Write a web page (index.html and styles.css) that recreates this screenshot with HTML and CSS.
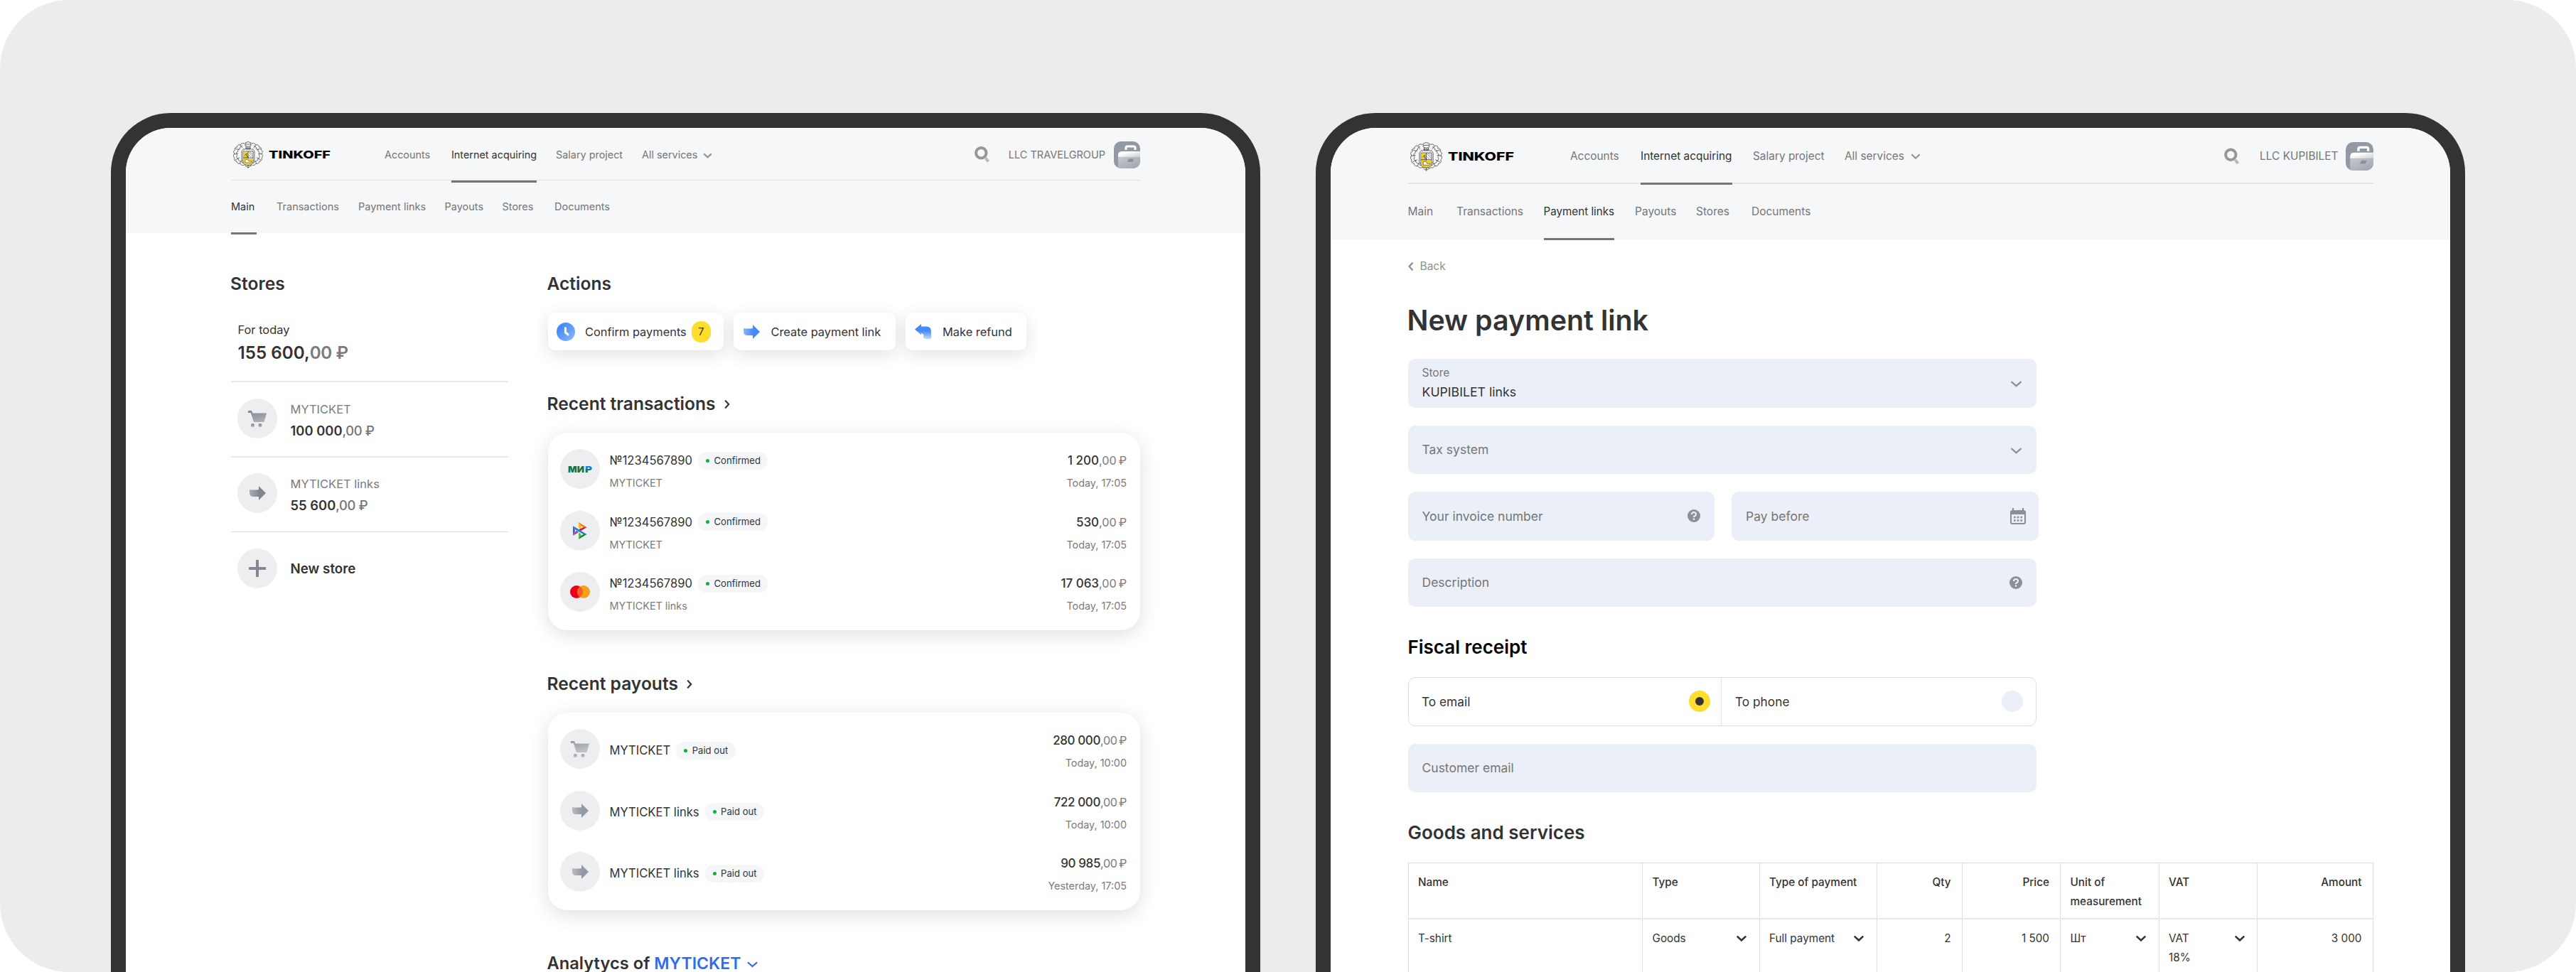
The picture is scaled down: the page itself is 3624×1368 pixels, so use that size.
FILE: index.html
```html
<!DOCTYPE html>
<html lang="en">
<head>
<meta charset="utf-8">
<title>Tinkoff Business</title>
<link rel="stylesheet" href="styles.css">
</head>
<body>
<svg class="sprite" width="0" height="0" aria-hidden="true">
  <defs>
    <linearGradient id="g-blue" x1="0" y1="0" x2="1" y2="0"><stop offset="0" stop-color="#8DB7FB"/><stop offset=".6" stop-color="#428BF9"/></linearGradient>
    <linearGradient id="g-blue-down" x1="0" y1="0" x2="0" y2="1"><stop offset=".45" stop-color="#428BF9"/><stop offset="1" stop-color="#C4DAFD"/></linearGradient>
    <linearGradient id="g-clock" x1="0" y1="0" x2="1" y2="1"><stop offset=".2" stop-color="#428BF9"/><stop offset="1" stop-color="#8DB7FB"/></linearGradient>
    <linearGradient id="g-gray" x1="0" y1="0" x2="1" y2="0"><stop offset="0" stop-color="#A9AFB6"/><stop offset=".6" stop-color="#7D858F"/></linearGradient>
    <linearGradient id="g-gray-light" x1="0" y1="0" x2="1" y2="0"><stop offset="0" stop-color="#B7BBC2"/><stop offset=".6" stop-color="#9299A4"/></linearGradient>
    <linearGradient id="g-cart" x1="0" y1="0" x2=".3" y2="1"><stop offset="0" stop-color="#7D858F"/><stop offset="1" stop-color="#A9AFB6"/></linearGradient>
    <linearGradient id="g-cart-light" x1="0" y1="0" x2=".3" y2="1"><stop offset="0" stop-color="#9299A4"/><stop offset="1" stop-color="#BFC3C9"/></linearGradient>
    <linearGradient id="g-lid" x1="0" y1="0" x2="1" y2="1"><stop offset=".3" stop-color="#fff"/><stop offset="1" stop-color="#C9CCD1"/></linearGradient>
    <linearGradient id="g-case" x1="0" y1="0" x2="1" y2="1"><stop offset="0" stop-color="#C6C9CE"/><stop offset="1" stop-color="#9DA3AC"/></linearGradient>
    <linearGradient id="g-mir" x1="0" y1="0" x2="0" y2="1"><stop offset=".5" stop-color="#1A7FE8"/><stop offset=".52" stop-color="#0F754E"/></linearGradient>
  </defs>
  <symbol id="emblem" viewBox="0 0 42 38">
    <g fill="none" stroke="#4a4a4a" stroke-width=".8" stroke-linejoin="round">
      <path d="M16 3C13 2 11 3 10 5 7 4 5 6 6 8 3 8 1 10 3 12 0 13 0 16 2 17 0 19 0 22 2 23 1 25 2 28 5 28 5 31 8 32 10 31 11 34 14 34 16 33M26 3C29 2 31 3 32 5 35 4 37 6 36 8 39 8 41 10 39 12 42 13 42 16 40 17 42 19 42 22 40 23 41 25 40 28 37 28 37 31 34 32 32 31 31 34 28 34 26 33" />
      <path d="M13 6C10 7 9 9 10 10 7 10 6 13 7 14 4 15 4 18 6 19 4 21 5 24 7 24 7 27 9 28 11 28 12 30 14 31 15 30M29 6C32 7 33 9 32 10 35 10 36 13 35 14 38 15 38 18 36 19 38 21 37 24 35 24 35 27 33 28 31 28 30 30 28 31 27 30"/>
      <path d="M10 5l3 4M3 10l6 2M1 18l6-1M3 26l6-3M9 31l3-4M32 5l-3 4M39 10l-6 2M41 18l-6-1M39 26l-6-3M33 31l-3-4M15 10l-3 4v12l3 4M27 10l3 4v12l-3 4"/>
      <path d="M17 2q4-3 8 0v4q-4 3-8 0zM17 4h8M18 7v4h6V7M19 8v3M21 8v3M23 8v3M15 12l3-2h6l3 2"/>
      <path d="M16 33q2-1 5 1 3-2 5 1M17 34q4 5 8 0M21 34v4"/>
    </g>
    <path d="M14 14h14v15q0 4-7 4.500Q14 33 14 29z" fill="#fff" stroke="#3a3a3a" stroke-width=".8"/>
    <path d="M14.500 14.500H21v9.500h6.500v5q0 3.500-6.500 4-6.500-.5-6.500-4z" fill="#F2D02A"/>
    <path d="M21 14v10M14 23h14M16 20l3-3v4l3 1" fill="none" stroke="#3a3a3a" stroke-width=".8"/>
    <path d="M17 30v-4l3-1 2 3h4v2z" fill="#fff" stroke="#3a3a3a" stroke-width=".6"/>
    <path d="M22 15l5 6M22 19l3 3M24 15l3 3" fill="none" stroke="#777" stroke-width=".8"/>
  </symbol>
  <symbol id="search" viewBox="0 0 22 23">
    <path d="M15.500 16.500l4 5" stroke="#B9BABC" stroke-width="4.200"/>
    <circle cx="9.300" cy="9.300" r="7.200" fill="none" stroke="#969798" stroke-width="4"/>
  </symbol>
  <symbol id="avatar" viewBox="0 0 37 38">
    <clipPath id="avatar-clip"><rect width="37" height="38" rx="10"/></clipPath>
    <g clip-path="url(#avatar-clip)">
      <rect width="37" height="38" fill="#9299A4"/>
      <path d="M17 12V9q0-2 2-2h9q2 0 2 2v3" fill="none" stroke="#fff" stroke-width="3.200"/>
      <path d="M6 22v-3q0-5 6-5h25v8z" fill="url(#g-lid)"/>
      <path d="M6 22h31v16H6z" fill="url(#g-case)"/>
      <path d="M21 24.500h7l-1.500 4.500h-7.500z" fill="#89909B"/>
    </g>
  </symbol>
  <symbol id="chev-down" viewBox="0 0 16 9"><path d="M1 1.200l7 6 7-6" fill="none" stroke="currentColor" stroke-width="2.200"/></symbol>
  <symbol id="chev-down-bold" viewBox="0 0 12 8"><path d="M1 1.300l5 4.700 5-4.700" fill="none" stroke="currentColor" stroke-width="2.100"/></symbol>
  <symbol id="chev-right" viewBox="0 0 8 12"><path d="M1.200 .6l5 5.400-5 5.400" fill="none" stroke="currentColor" stroke-width="2.200"/></symbol>
  <symbol id="chev-left" viewBox="0 0 8 12"><path d="M6.500 .6l-5 5.400 5 5.400" fill="none" stroke="currentColor" stroke-width="2.300"/></symbol>
  <symbol id="arrow" viewBox="0 0 23 20"><path d="M0 5q6 1 13 0V0l10 10-10 10v-5H5q-5 0-5-6z"/></symbol>
  <symbol id="cart" viewBox="0 0 26 23"><path d="M0 0h5l1.500 3.500H26L22.500 16H8L3.800 3H0z"/><circle cx="6.500" cy="20.500" r="2.500"/><circle cx="17" cy="20.500" r="2.500"/></symbol>
  <symbol id="help" viewBox="0 0 18 18"><circle cx="9" cy="9" r="9" fill="#8C8F93"/><path d="M6 7q0-3 3-3t3 2.700Q12 8.500 9 10v1" fill="none" stroke="#EBEFF7" stroke-width="2.100"/><circle cx="9" cy="13.600" r="1.300" fill="#EBEFF7"/></symbol>
  <symbol id="calendar" viewBox="0 0 22 23">
    <path d="M4 0v4M18 0v4" stroke="#8C8F93" stroke-width="2.200"/>
    <rect x="1" y="4" width="20" height="18" rx="2" fill="none" stroke="#8C8F93" stroke-width="2"/>
    <path d="M1 4h20v5H1z" fill="#8C8F93"/>
    <path d="M5 13h12M5 17.500h12" stroke="#8C8F93" stroke-width="2.600" stroke-dasharray="2.600 2.100"/>
  </symbol>
</svg>

<div class="stage">
  <!-- Dashboard -->
  <section class="tablet tablet-left">
    <header class="header">
      <div class="topbar">
        <div class="logo"><svg class="emblem"><use href="#emblem"/></svg><svg class="wordmark" viewBox="0 0 90 12"><text x="0" y="11.300" textLength="89" lengthAdjust="spacingAndGlyphs" class="wordmark-text">TINKOFF</text></svg></div>
        <nav class="nav">
          <a>Accounts</a><a class="active">Internet acquiring</a><a>Salary project</a><a class="raised">All services<svg class="nav-chev"><use href="#chev-down-bold"/></svg></a>
        </nav>
        <div class="account"><svg class="search"><use href="#search"/></svg><span>LLC TRAVELGROUP</span><svg class="avatar"><use href="#avatar"/></svg></div>
      </div>
      <nav class="subnav"><a class="active">Main</a><a>Transactions</a><a>Payment links</a><a>Payouts</a><a>Stores</a><a>Documents</a></nav>
    </header>
    <main class="dashboard">
      <aside class="stores">
        <h2>Stores</h2>
        <div class="total">
          <div class="total-label">For today</div>
          <div class="total-sum">155 600,<span>00 ₽</span></div>
        </div>
        <div class="store">
          <span class="disc"><svg class="i-cart" fill="url(#g-cart)"><use href="#cart"/></svg></span>
          <div><div class="store-name">MYTICKET</div><div class="store-sum">100 000<span>,00 ₽</span></div></div>
        </div>
        <div class="store second">
          <span class="disc"><svg class="i-arrow" fill="url(#g-gray)"><use href="#arrow"/></svg></span>
          <div><div class="store-name">MYTICKET links</div><div class="store-sum">55 600<span>,00 ₽</span></div></div>
        </div>
        <div class="store last">
          <span class="disc"><svg width="24" height="24" viewBox="0 0 24 24"><path d="M12 0v24M0 12h24" stroke="#7F8893" stroke-width="4"/></svg></span>
          <div class="new-store">New store</div>
        </div>
      </aside>
      <div class="feed">
        <h2>Actions</h2>
        <div class="actions">
          <div class="action a1"><span class="ico"><svg width="26" height="26" viewBox="0 0 26 26"><circle cx="13" cy="13" r="13" fill="url(#g-clock)"/><path d="M12.500 6.500v7.500l4.500 3.500" fill="none" stroke="#fff" stroke-width="3"/></svg></span>Confirm payments<span class="count">7</span></div>
          <div class="action a2"><span class="ico"><svg class="i-arrow" fill="url(#g-blue)"><use href="#arrow"/></svg></span>Create payment link</div>
          <div class="action a3"><span class="ico"><svg width="23" height="21" viewBox="0 0 23 21"><path d="M0 7.500L9 0v3.500h7q7 0 7 7V21h-5q-5 0-6-2 2-5-3-6v2.500z" fill="url(#g-blue-down)"/></svg></span>Make refund</div>
        </div>
        <h2 class="next">Recent transactions<svg class="h-chev"><use href="#chev-right"/></svg></h2>
        <div class="card">
          <div class="row">
            <span class="disc"><svg width="34" height="12" viewBox="0 0 34 12"><text x="0" y="10.500" textLength="23" lengthAdjust="spacingAndGlyphs" class="mir" fill="#0F754E">МИ</text><text x="24" y="10.500" textLength="10" lengthAdjust="spacingAndGlyphs" class="mir" fill="url(#g-mir)">Р</text></svg></span>
            <div class="what"><div class="line">№1234567890<span class="badge">Confirmed</span></div><div class="sub">MYTICKET</div></div>
            <div class="sum"><div class="line">1 200<span>,00&#8201;₽</span></div><div class="sub">Today, 17:05</div></div>
          </div>
          <div class="row">
            <span class="disc"><svg width="20" height="24" viewBox="0 0 20 24"><path d="M0 5v14l2.800-5V10z" fill="#5B57A2"/><path d="M0 19l8-5-2.500-2.500L2.800 14z" fill="#90529A"/><path d="M8 0v7.500l3 2V5z" fill="#FAB718"/><path d="M8 0l11.500 7-4.500 0L11 5z" fill="#EE7E17"/><path d="M19.500 7L11 12.200 8 10.200 15 7z" fill="#E5113C"/><path d="M8 24v-9.500l3 1.800V19z" fill="#5FB346"/><path d="M8 24l11.500-7h-4.500L11 19z" fill="#118842"/><path d="M0 5l19.500 12h-4.700L2.800 10z" fill="#1E87CB"/></svg></span>
            <div class="what"><div class="line">№1234567890<span class="badge">Confirmed</span></div><div class="sub">MYTICKET</div></div>
            <div class="sum"><div class="line">530<span>,00&#8201;₽</span></div><div class="sub">Today, 17:05</div></div>
          </div>
          <div class="row">
            <span class="disc"><svg width="28" height="18" viewBox="0 0 28 18"><circle cx="9" cy="9" r="9" fill="#EB001B"/><circle cx="19" cy="9" r="9" fill="#F79E1B"/><path d="M14 1.500a9 9 0 0 1 0 15 9 9 0 0 1 0-15z" fill="#F3601F"/></svg></span>
            <div class="what"><div class="line">№1234567890<span class="badge">Confirmed</span></div><div class="sub">MYTICKET links</div></div>
            <div class="sum"><div class="line">17 063<span>,00&#8201;₽</span></div><div class="sub">Today, 17:05</div></div>
          </div>
        </div>
        <h2 class="next">Recent payouts<svg class="h-chev"><use href="#chev-right"/></svg></h2>
        <div class="card payouts">
          <div class="row">
            <span class="disc"><svg class="i-cart" fill="url(#g-cart-light)"><use href="#cart"/></svg></span>
            <div class="what single"><div class="line">MYTICKET<span class="badge">Paid out</span></div></div>
            <div class="sum"><div class="line">280 000<span>,00&#8201;₽</span></div><div class="sub">Today, 10:00</div></div>
          </div>
          <div class="row">
            <span class="disc"><svg class="i-arrow" fill="url(#g-gray-light)"><use href="#arrow"/></svg></span>
            <div class="what single"><div class="line">MYTICKET links<span class="badge">Paid out</span></div></div>
            <div class="sum"><div class="line">722 000<span>,00&#8201;₽</span></div><div class="sub">Today, 10:00</div></div>
          </div>
          <div class="row">
            <span class="disc"><svg class="i-arrow" fill="url(#g-gray-light)"><use href="#arrow"/></svg></span>
            <div class="what single"><div class="line">MYTICKET links<span class="badge">Paid out</span></div></div>
            <div class="sum"><div class="line">90 985<span>,00&#8201;₽</span></div><div class="sub">Yesterday, 17:05</div></div>
          </div>
        </div>
        <h2 class="next analytics">Analytycs of <span class="pick">MYTICKET<svg class="pick-chev"><use href="#chev-down"/></svg></span></h2>
      </div>
    </main>
  </section>

  <!-- New payment link -->
  <section class="tablet tablet-right">
    <header class="header">
      <div class="topbar">
        <div class="logo"><svg class="emblem"><use href="#emblem"/></svg><svg class="wordmark" viewBox="0 0 90 12"><text x="0" y="11.300" textLength="89" lengthAdjust="spacingAndGlyphs" class="wordmark-text">TINKOFF</text></svg></div>
        <nav class="nav">
          <a>Accounts</a><a class="active">Internet acquiring</a><a>Salary project</a><a class="raised">All services<svg class="nav-chev"><use href="#chev-down-bold"/></svg></a>
        </nav>
        <div class="account"><svg class="search"><use href="#search"/></svg><span>LLC KUPIBILET</span><svg class="avatar"><use href="#avatar"/></svg></div>
      </div>
      <nav class="subnav"><a>Main</a><a>Transactions</a><a class="active">Payment links</a><a>Payouts</a><a>Stores</a><a>Documents</a></nav>
    </header>
    <main class="link-form">
      <a class="back"><svg width="8" height="12"><use href="#chev-left"/></svg>Back</a>
      <h1>New payment link</h1>
      <div class="fields">
        <div class="field filled"><div><div class="field-label">Store</div><div class="field-value">KUPIBILET links</div></div><svg class="f-chev"><use href="#chev-down"/></svg></div>
        <div class="field"><span>Tax system</span><svg class="f-chev"><use href="#chev-down"/></svg></div>
        <div class="pair">
          <div class="field"><span>Your invoice number</span><svg class="f-help"><use href="#help"/></svg></div>
          <div class="field"><span>Pay before</span><svg class="f-cal"><use href="#calendar"/></svg></div>
        </div>
        <div class="field"><span>Description</span><svg class="f-help"><use href="#help"/></svg></div>
      </div>
      <h2 class="black">Fiscal receipt</h2>
      <div class="fields">
        <div class="segmented"><div class="option">To email<span class="radio on"></span></div><div class="option">To phone<span class="radio"></span></div></div>
        <div class="field"><span>Customer email</span></div>
      </div>
      <h2>Goods and services</h2>
      <div class="goods">
        <div class="tr th"><div>Name</div><div>Type</div><div>Type of payment</div><div class="num">Qty</div><div class="num">Price</div><div>Unit of<br>measurement</div><div>VAT</div><div class="num">Amount</div></div>
        <div class="tr"><div>T-shirt</div><div class="sel">Goods<svg class="t-chev"><use href="#chev-down-bold"/></svg></div><div class="sel">Full payment<svg class="t-chev"><use href="#chev-down-bold"/></svg></div><div class="num">2</div><div class="num">1 500</div><div class="sel">Шт<svg class="t-chev"><use href="#chev-down-bold"/></svg></div><div class="sel"><span>VAT<br>18%</span><svg class="t-chev"><use href="#chev-down-bold"/></svg></div><div class="num">3 000</div></div>
      </div>
    </main>
  </section>
</div>
</body>
</html>
```
FILE: styles.css
```css
* { box-sizing: border-box; }
body { margin: 0; background: #fff; font-family: Inter, "Liberation Sans", sans-serif; color: #333; }
svg { display: block; flex: none; }
.sprite { position: absolute; }
h1, h2 { margin: 0; font-weight: 600; color: #333; white-space: nowrap; }

.stage { width: 3624px; height: 1368px; padding: 159px 156px 0; display: flex; justify-content: space-between; background: #ebecee; border-radius: 97px; overflow: hidden; }
.tablet { width: 1617px; height: 1209px; border: 21px solid #333; border-bottom: 0; border-radius: 84px 84px 0 0; background: #fff; overflow: hidden; }

/* header */
.header { background: #f6f7f9; }
.tablet-left .header { height: 148px; padding: 0 148px; font-size: 14.5px; }
.tablet-right .header { height: 157px; padding: 0 108.5px; font-size: 15.5px; }
.topbar { display: flex; align-items: flex-start; }
.tablet-left .topbar { height: 74px; border-bottom: 1px solid #dddfe0; }
.tablet-right .topbar { height: 79px; border-bottom: 2px solid #e5e6e8; }
.logo { display: flex; align-items: center; }
.tablet-left .logo { width: 216px; height: 75px; padding-left: 3px; }
.tablet-right .logo { width: 228.5px; height: 80px; padding-left: 3px; }
.tablet-left .emblem { width: 42px; height: 38px; margin-right: 8px; }
.tablet-left .wordmark { width: 88px; height: 12px; }
.tablet-right .emblem { width: 45px; height: 41px; margin-right: 8px; }
.tablet-right .wordmark { width: 94px; height: 13px; }
.wordmark-text { font: 800 15px Inter, sans-serif; fill: #000; }

.nav, .subnav { display: grid; justify-items: start; color: #757677; }
.nav a, .subnav a { white-space: nowrap; }
.nav .active, .subnav .active { color: #333; border-bottom: 3px solid #757575; }
.nav .raised { display: flex; align-items: center; position: relative; top: -1px; }
.tablet-left .nav { grid-template-columns: 94px 147px 121px auto; font-size: 14.400px; }
.tablet-left .nav a { height: 77px; line-height: 76px; }
.tablet-left .subnav { grid-template-columns: 64px 115px 121.5px 81px 73.5px auto; height: 74px; }
.tablet-left .subnav a { height: 76px; line-height: 73.500px; }
.tablet-left .subnav .active { min-width: 36px; }
.tablet-right .nav { grid-template-columns: 99px 158px 129px auto; font-size: 15.400px; }
.tablet-right .nav a { height: 80px; line-height: 79px; }
.tablet-right .subnav { grid-template-columns: 68.5px 122.5px 128.5px 86px 78px auto; height: 78px; }
.tablet-right .subnav a { height: 79px; line-height: 77px; }
.tablet-right .subnav .active { font-size: 15.200px; }
.nav-chev { width: 13px; height: 8.500px; margin: 3px 0 0 8px; color: #969798; }
.tablet-right .nav-chev { width: 14px; height: 9px; margin-left: 9px; }

.account { display: flex; align-items: center; margin-left: auto; height: 75px; color: #757677; }
.tablet-right .account { height: 79px; }
.search { width: 22px; height: 23px; margin-right: 26px; }
.tablet-right .search { margin-right: 28.500px; height: 24px; }
.avatar { width: 37px; height: 38px; margin-left: 12px; }
.tablet-right .avatar { width: 39px; height: 40px; margin-left: 10px; }
.tablet-right .account { font-size: 15.400px; }

/* dashboard */
.dashboard { display: grid; grid-template-columns: 389.5px 833.5px; column-gap: 56px; padding: 56px 148px 0; }
.dashboard h2 { margin-left: -1px; font-size: 24.600px; line-height: 30px; }
.total { margin-top: 40px; padding: 0 0 24px 9.500px; border-bottom: 2px solid #e9e9ea; }
.total-label { font-size: 16.400px; line-height: 20px; }
.total-sum { margin-top: 8px; font-size: 24.200px; line-height: 30px; font-weight: 600; }
.total-sum span { color: #7b7b7b; font-weight: 600; letter-spacing: -.4px; }
.store { display: flex; gap: 18.500px; height: 106px; padding: 23px 0 0 9px; border-bottom: 2px solid #e9e9ea; }
.store.second { height: 105px; border-bottom: 1px solid #dcdcdd; padding-top: 22px; }
.store.last { border: 0; }
.disc { flex: none; display: flex; align-items: center; justify-content: center; width: 56px; height: 56px; border-radius: 50%; background: #eeeef0; }
.i-cart { width: 26px; height: 23px; }
.i-arrow { width: 23px; height: 20px; }
.store-name { font-size: 16.500px; line-height: 30px; color: #7b7b7b; }
.store-sum { font-size: 18.400px; line-height: 30px; font-weight: 600; }
.store-sum span { font-weight: 500; color: #757575; letter-spacing: -.4px; }
.new-store { font-size: 18.800px; line-height: 57px; font-weight: 600; }

.actions { display: flex; gap: 14px; margin-top: 26px; }
.action { display: flex; align-items: center; height: 53px; padding-left: 12px; border-radius: 10px; background: #fff; box-shadow: 0 6px 24px rgba(0,0,0,.12); font-size: 16.400px; white-space: nowrap; }
.a1 { width: 247.5px; }
.a2 { width: 227.5px; }
.a3 { width: 170.5px; }
.ico { display: flex; justify-content: center; width: 26px; margin-right: 14.500px; }
.count { width: 27px; height: 30px; margin-left: 7px; border-radius: 13px; background: #ffdd2d; font-size: 14.500px; line-height: 30px; text-align: center; }

.next { display: flex; align-items: center; margin-top: 60px; }
.h-chev { width: 8px; height: 12px; margin: 2px 0 0 12.500px; }
.card { height: 278px; margin-top: 26px; padding: 23px 19px 0 17.500px; border-radius: 27px; background: #fff; box-shadow: 0 6px 28px rgba(0,0,0,.13); }
.row { display: flex; height: 86.500px; }
.what { margin-left: 13.500px; }
.what.single { padding-top: 14px; }
.line { display: flex; align-items: center; font-size: 16.600px; line-height: 32px; height: 32px; white-space: nowrap; }
.payouts .what .line { font-size: 16.600px; }
.sub { font-size: 14.400px; line-height: 32px; color: #7b7b7b; white-space: nowrap; }
.sum { margin-left: auto; text-align: right; }
.sum .line { justify-content: flex-end; font-weight: 500; font-size: 17px; }
.sum .line span { font-weight: 400; color: #7b7b7b; font-size: 16.200px; }
.payouts .sum .line { letter-spacing: -.4px; }
.badge { display: flex; align-items: center; height: 25px; margin-left: 8px; padding: 0 10.500px 0 11px; border-radius: 12px; background: #f5f6f8; font-size: 13.100px; line-height: 25px; }
.badge::before { content: ""; width: 5px; height: 5px; margin-right: 6.500px; border-radius: 50%; background: #09b33a; }
.dashboard .analytics { font-size: 23.700px; white-space: pre; }
.pick { display: flex; align-items: center; color: #2f6df0; font-weight: 600; font-size: 23.100px; }
.pick-chev { width: 15px; height: 9px; margin: 3px 0 0 8px; }
.mir { font: 900 12.400px Inter, sans-serif; }

/* payment link form */
.link-form { padding: 27.5px 108.5px 0; }
.back { display: flex; align-items: center; gap: 9px; font-size: 15.500px; line-height: 20px; color: #8f9092; }
.link-form h1 { margin: 41px 0 29.500px -1px; font-size: 39.400px; line-height: 50px; }
.link-form h2 { margin: 42px 0 27px; font-size: 26px; line-height: 30px; }
.link-form h2.black { color: #000; }
.fields { display: grid; grid-template-columns: 884.5px; gap: 25px; }
.field { display: flex; align-items: center; justify-content: space-between; height: 68.500px; padding: 0 20px; border-radius: 10px; background: #ebeff7; font-size: 17.500px; color: #757677; }
.pair { display: grid; grid-template-columns: 431.5px 431.5px; gap: 24px; }
.pair .field:last-child { padding-right: 18px; }
.field-label { font-size: 15.500px; line-height: 26px; }
.field-value { font-size: 17.700px; line-height: 27px; color: #333; }
.filled > div { padding-bottom: 1px; }
.f-chev { width: 17px; height: 9px; color: #8c8f93; margin-top: 3px; }
.f-help { width: 18px; height: 18px; }
.f-cal { width: 22px; height: 23px; }
.segmented { display: grid; grid-template-columns: 439.5px 1fr; height: 68.500px; border: 1.500px solid #dddddf; border-radius: 10px; }
.option { display: flex; align-items: center; justify-content: space-between; padding: 0 15.500px 0 18.500px; font-size: 17.300px; }
.option + .option { border-left: 1px solid #e3e3e4; padding-right: 18px; padding-left: 19px; }
.radio { width: 30px; height: 30px; border-radius: 50%; background: #ebeff7; }
.radio.on { border: 9px solid #ffdd2d; background: #333; }

.goods { width: 1358px; border: 1px solid #dddddf; border-top-color: #dcdcde; font-size: 15.300px; line-height: 27px; }
.tr { display: grid; grid-template-columns: 329.500px 164.5px 165px 120px 138.5px 138.5px 138.5px 1fr; height: 90px; }
.tr > div { padding: 12.500px 15px 0 13.500px; border-right: 1px solid #dfdfe1; white-space: nowrap; }
.tr > div:last-child { border-right: 0; }
.th { height: 79px; border-bottom: 2px solid #e8e8e9; font-weight: 500; }
.tr .num { text-align: right; }
.sel { display: flex; justify-content: space-between; align-items: flex-start; }
.tr .sel { padding-right: 16.500px; }
.t-chev { width: 16px; height: 10px; margin-top: 9.500px; }
```
